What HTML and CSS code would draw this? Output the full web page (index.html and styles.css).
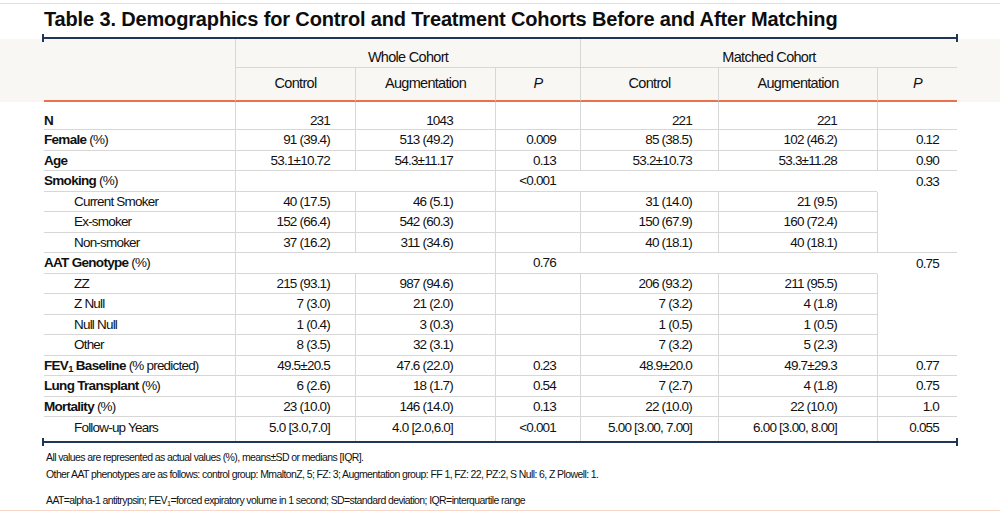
FILE: index.html
```html
<!DOCTYPE html>
<html lang="en">
<head>
<meta charset="utf-8">
<title>Table 3</title>
<link rel="stylesheet" href="styles.css">
</head>
<body>
<div class="topline"></div>
<h1 class="title">Table 3. Demographics for Control and Treatment Cohorts Before and After Matching</h1>
<div class="rule"></div>
<div class="band">
<table class="demo">
  <colgroup>
    <col class="c-lab"><col class="c-wc"><col class="c-wa"><col class="c-wp"><col class="c-mc"><col class="c-ma"><col class="c-mp">
  </colgroup>
  <thead>
    <tr class="h1">
      <th class="lab" rowspan="2"></th>
      <th class="grp" colspan="3">Whole Cohort</th>
      <th class="grp" colspan="3">Matched Cohort</th>
    </tr>
    <tr class="h2">
      <th>Control</th><th>Augmentation</th><th><i>P</i></th>
      <th>Control</th><th>Augmentation</th><th><i>P</i></th>
    </tr>
  </thead>
  <tbody>
    <tr class="rn">
      <td class="lab"><b>N</b></td><td class="wc">231</td><td class="wa">1043</td><td class="wp"></td><td class="mc">221</td><td class="ma">221</td><td class="mp"></td>
    </tr>
    <tr>
      <td class="lab"><b>Female</b> (%)</td><td class="wc">91 (39.4)</td><td class="wa">513 (49.2)</td><td class="wp">0.009</td><td class="mc">85 (38.5)</td><td class="ma">102 (46.2)</td><td class="mp">0.12</td>
    </tr>
    <tr>
      <td class="lab"><b>Age</b></td><td class="wc">53.1±10.72</td><td class="wa">54.3±11.17</td><td class="wp">0.13</td><td class="mc">53.2±10.73</td><td class="ma">53.3±11.28</td><td class="mp">0.90</td>
    </tr>
    <tr>
      <td class="lab"><b>Smoking</b> (%)</td><td class="span" colspan="2"></td><td class="wp">&lt;0.001</td><td class="span" colspan="2"></td><td class="mp open">0.33</td>
    </tr>
    <tr>
      <td class="lab sub">Current Smoker</td><td class="wc">40 (17.5)</td><td class="wa">46 (5.1)</td><td class="wp"></td><td class="mc">31 (14.0)</td><td class="ma">21 (9.5)</td><td class="mp mid"></td>
    </tr>
    <tr>
      <td class="lab sub">Ex-smoker</td><td class="wc">152 (66.4)</td><td class="wa">542 (60.3)</td><td class="wp"></td><td class="mc">150 (67.9)</td><td class="ma">160 (72.4)</td><td class="mp mid"></td>
    </tr>
    <tr>
      <td class="lab sub">Non-smoker</td><td class="wc">37 (16.2)</td><td class="wa">311 (34.6)</td><td class="wp"></td><td class="mc">40 (18.1)</td><td class="ma">40 (18.1)</td><td class="mp end"></td>
    </tr>
    <tr>
      <td class="lab"><b>AAT Genotype</b> (%)</td><td class="span" colspan="2"></td><td class="wp">0.76</td><td class="span" colspan="2"></td><td class="mp open">0.75</td>
    </tr>
    <tr>
      <td class="lab sub">ZZ</td><td class="wc">215 (93.1)</td><td class="wa">987 (94.6)</td><td class="wp"></td><td class="mc">206 (93.2)</td><td class="ma">211 (95.5)</td><td class="mp mid"></td>
    </tr>
    <tr>
      <td class="lab sub">Z Null</td><td class="wc">7 (3.0)</td><td class="wa">21 (2.0)</td><td class="wp"></td><td class="mc">7 (3.2)</td><td class="ma">4 (1.8)</td><td class="mp mid"></td>
    </tr>
    <tr>
      <td class="lab sub">Null Null</td><td class="wc">1 (0.4)</td><td class="wa">3 (0.3)</td><td class="wp"></td><td class="mc">1 (0.5)</td><td class="ma">1 (0.5)</td><td class="mp mid"></td>
    </tr>
    <tr>
      <td class="lab sub">Other</td><td class="wc">8 (3.5)</td><td class="wa">32 (3.1)</td><td class="wp"></td><td class="mc">7 (3.2)</td><td class="ma">5 (2.3)</td><td class="mp end"></td>
    </tr>
    <tr>
      <td class="lab"><b>FEV<sub>1</sub> Baseline</b> (% predicted)</td><td class="wc">49.5±20.5</td><td class="wa">47.6 (22.0)</td><td class="wp">0.23</td><td class="mc">48.9±20.0</td><td class="ma">49.7±29.3</td><td class="mp">0.77</td>
    </tr>
    <tr>
      <td class="lab"><b>Lung Transplant</b> (%)</td><td class="wc">6 (2.6)</td><td class="wa">18 (1.7)</td><td class="wp">0.54</td><td class="mc">7 (2.7)</td><td class="ma">4 (1.8)</td><td class="mp">0.75</td>
    </tr>
    <tr>
      <td class="lab"><b>Mortality</b> (%)</td><td class="wc">23 (10.0)</td><td class="wa">146 (14.0)</td><td class="wp">0.13</td><td class="mc">22 (10.0)</td><td class="ma">22 (10.0)</td><td class="mp">1.0</td>
    </tr>
    <tr class="last">
      <td class="lab sub">Follow-up Years</td><td class="wc">5.0 [3.0,7.0]</td><td class="wa">4.0 [2.0,6.0]</td><td class="wp">&lt;0.001</td><td class="mc">5.00 [3.00, 7.00]</td><td class="ma">6.00 [3.00, 8.00]</td><td class="mp">0.055</td>
    </tr>
  </tbody>
</table>
</div>
<div class="rule"></div>
<div class="notes">
  <p>All values are represented as actual values (%), means±SD or medians [IQR].</p>
  <p>Other AAT phenotypes are as follows: control group: MmaltonZ, 5; FZ: 3; Augmentation group: FF 1, FZ: 22, PZ:2, S Null: 6, Z Plowell: 1.</p>
  <p class="gap">AAT=alpha-1 antitrypsin; FEV<sub>1</sub>=forced expiratory volume in 1 second; SD=standard deviation; IQR=interquartile range</p>
</div>
<div class="bottomline"></div>
</body>
</html>
```

FILE: styles.css
```css
html, body {
  margin: 0;
  padding: 0;
  background: #ffffff;
  color: #111111;
  width: 1000px;
  overflow: hidden;
}

body {
  font-family: "Liberation Sans", Arial, sans-serif;
}

.topline {
  margin-top: 3px;
  height: 1px;
  background: #f7d8c8;
}

.title {
  margin: 4px 0 0 44px;
  font-weight: 700;
  font-size: 20px;
  line-height: 23px;
  letter-spacing: -0.15px;
  color: #0d0d0d;
}

.rule {
  position: relative;
  margin: 6px 0 0 42px;
  width: 916px;
  height: 2px;
  background: #1f3658;
}

.rule::before,
.rule::after {
  content: "";
  position: absolute;
  top: -3px;
  width: 2px;
  height: 8px;
  background: #1f3658;
}

.rule::before { left: 0; }
.rule::after { right: 0; }

.band + .rule {
  margin-top: 0;
}

.band {
  padding-left: 44px;
  background: linear-gradient(to bottom, #f9f7f4 0, #f9f7f4 63px, #ffffff 63px);
}

.demo {
  table-layout: fixed;
  width: 913px;
  border-collapse: separate;
  border-spacing: 0;
  font-size: 13.5px;
  line-height: 16px;
  letter-spacing: -0.8px;
  color: #111111;
}

.c-lab { width: 191px; }
.c-wc { width: 120px; }
.c-wa { width: 140px; }
.c-wp { width: 85px; }
.c-mc { width: 138px; }
.c-ma { width: 159px; }
.c-mp { width: 80px; }

.demo th {
  font-weight: 400;
  font-size: 14.5px;
  letter-spacing: -0.7px;
  color: #111111;
  text-align: center;
  padding: 0;
  border-left: 1px solid #d7d7d7;
  border-bottom: 2px solid #ec7049;
}

.demo th i {
  font-style: italic;
}

.demo th.lab {
  border-left: 0;
}

.demo tr.h1 {
  height: 29px;
}

.demo tr.h1 th.grp {
  border-bottom: 1px solid #d7d7d7;
  vertical-align: bottom;
  padding-bottom: 1px;
  line-height: 17px;
}

.demo tr.h2 {
  height: 34px;
}

.demo tr.h2 th {
  vertical-align: middle;
  padding-bottom: 3px;
}

.demo tbody tr {
  height: 20.5px;
}

.demo tbody tr.rn {
  height: 28px;
}

.demo tbody tr.last {
  height: 24px;
}

.demo td {
  padding: 1px 0 0 0;
  vertical-align: middle;
  text-align: right;
  white-space: nowrap;
  border-left: 1px solid #d7d7d7;
  border-bottom: 1px solid #d7d7d7;
}

.demo tr.rn td {
  vertical-align: bottom;
  padding-bottom: 0;
}

.demo tr.last td {
  border-bottom: 0;
  padding-top: 0;
  padding-bottom: 2px;
}

.demo td.lab {
  border-left: 0;
  text-align: left;
}

.demo td.lab.sub {
  padding-left: 30px;
}

.demo td b {
  font-weight: 700;
  letter-spacing: -0.7px;
}

.demo sub,
.notes sub {
  font-size: 0.7em;
  line-height: 0;
  vertical-align: -0.25em;
}

.demo td.wc { padding-right: 25px; }
.demo td.wa { padding-right: 42px; }
.demo td.wp { padding-right: 24px; }
.demo td.mc { padding-right: 26px; }
.demo td.ma { padding-right: 40px; }
.demo td.mp { padding-right: 18px; }

.demo td.span {
  border-left: 0;
}

.demo td.span:nth-child(2) {
  border-left: 1px solid #d7d7d7;
}

.demo td.mp.open {
  border-left: 0;
  border-bottom: 0;
}

.demo td.mp.mid {
  border-bottom: 0;
}

.notes {
  padding: 6px 0 0 46px;
  font-size: 10.5px;
  letter-spacing: -0.6px;
  line-height: 17px;
  color: #111111;
}

.notes p {
  margin: 0;
}

.notes p.gap {
  margin-top: 9px;
}

.bottomline {
  margin-top: 1px;
  height: 1px;
  background: #f7d8c8;
}
```
